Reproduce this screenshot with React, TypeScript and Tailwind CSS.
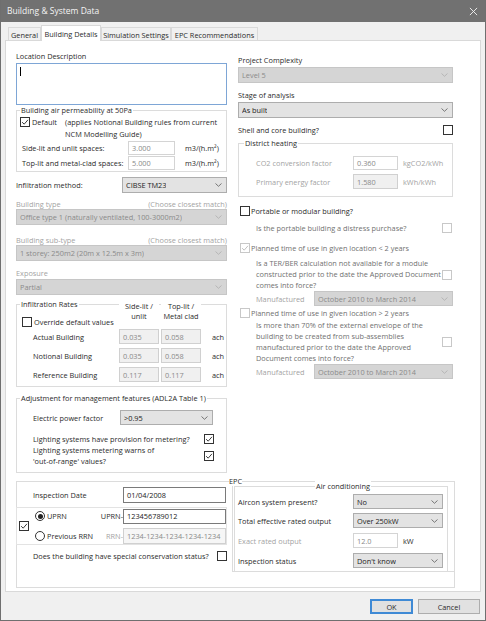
import React from "react";
import clsx from "clsx";

type Tone = "on" | "ro" | "off";

const dim = "text-[#a3a3a3]";
const grey = "text-[#707070]";

function Check({ on = false, faded = false, className = "" }: { on?: boolean; faded?: boolean; className?: string }) {
  return (
    <span
      className={clsx(
        "flex h-[10px] w-[10px] shrink-0 items-center justify-center border bg-white",
        faded ? "border-[#c8c8c8]" : "border-[#333]",
        className
      )}
    >
      {on && (
        <svg viewBox="0 0 10 10" className="h-[8px] w-[8px]">
          <path d="M1.4 5.2 L4 7.7 L8.7 2.3" fill="none" stroke={faded ? "#b8b8b8" : "#222"} strokeWidth="1.1" />
        </svg>
      )}
    </span>
  );
}

function Radio({ on = false }: { on?: boolean }) {
  return (
    <span className="flex h-[10px] w-[10px] shrink-0 items-center justify-center rounded-full border border-[#333] bg-white">
      {on && <span className="h-[5px] w-[5px] rounded-full bg-[#222]" />}
    </span>
  );
}

function Select({ value, off = false, className = "" }: { value: string; off?: boolean; className?: string }) {
  return (
    <div
      className={clsx(
        "flex shrink-0 items-center justify-between border pl-[3px] pr-[4px]",
        off ? "border-[#c6c6c6] bg-[#d5d5d5] text-[#8a8a8a]" : "border-[#adadad] bg-[#e3e3e3] text-[#222]",
        className
      )}
    >
      <span className="truncate whitespace-nowrap">{value}</span>
      <svg viewBox="0 0 7 4" className="h-[4px] w-[7px] shrink-0">
        <path d="M0.5 0.5 L3.5 3.3 L6.5 0.5" fill="none" stroke={off ? "#b2b2b2" : "#6a6a6a"} strokeWidth="0.9" />
      </svg>
    </div>
  );
}

function Field({ value, tone = "on", className = "" }: { value: string; tone?: Tone; className?: string }) {
  return (
    <div
      className={clsx(
        "flex shrink-0 items-center whitespace-nowrap border px-[3px]",
        tone === "on" && "border-[#7a7a7a] bg-white text-[#222]",
        tone === "ro" && "border-[#d4d4d4] bg-white text-[#8a8a8a]",
        tone === "off" && "border-[#d0d0d0] bg-[#f0f0f0] text-[#8a8a8a]",
        className
      )}
    >
      {value}
    </div>
  );
}

function Group({
  label,
  className = "",
  labelClass = "left-[3px]",
  children,
}: {
  label: string;
  className?: string;
  labelClass?: string;
  children?: React.ReactNode;
}) {
  return (
    <div className={clsx("relative shrink-0 border border-[#dcdcdc]", className)}>
      <span className={clsx("absolute -top-[6px] whitespace-nowrap bg-white px-px leading-[10px]", labelClass)}>{label}</span>
      {children}
    </div>
  );
}

function RateRow({ label, a, b, className = "" }: { label: string; a: string; b: string; className?: string }) {
  return (
    <div className={clsx("flex h-[15px] items-center", className)}>
      <span className="w-[102px] pl-[16px]">{label}</span>
      <Field tone="off" value={a} className="h-[15px] w-[40px]" />
      <Field tone="off" value={b} className="ml-[2px] h-[15px] w-[40px]" />
      <span className="ml-[11px]">ach</span>
    </div>
  );
}

function AirRow({ label, children, className = "", muted = false }: { label: string; children: React.ReactNode; className?: string; muted?: boolean }) {
  return (
    <div className={clsx("flex h-[15px] items-center pl-[3px]", className)}>
      <span className={clsx("w-[115px]", muted && dim)}>{label}</span>
      {children}
    </div>
  );
}

const tabs = [
  { name: "General", w: "w-[33px]" },
  { name: "Building Details", w: "w-[60px]", active: true },
  { name: "Simulation Settings", w: "w-[70px]" },
  { name: "EPC Recommendations", w: "w-[87px]" },
];

function LeftColumn() {
  return (
    <div className="flex w-[211px] shrink-0 flex-col">
      <span>Location Description</span>
      <div className="mt-[2px] h-[42px] border border-[#7ea6d6] bg-white pl-[3px] pt-[3px]">
        <span className="block h-[9px] w-px bg-black" />
      </div>

      <Group label="Building air permeability at 50Pa" className="mt-[5px] h-[62px]">
        <div className="flex items-start pl-[3px] pt-[5px] leading-[12px]">
          <Check on className="mt-px" />
          <span className="ml-[2px] w-[33px]">Default</span>
          <span className="whitespace-nowrap">
            (applies Notional Building rules from current
            <br />
            NCM Modelling Guide)
          </span>
        </div>
        <div className="mt-px flex h-[14px] items-center pl-[5px]">
          <span className="w-[106px]">Side-lit and unlit spaces:</span>
          <Field tone="ro" value="3.000" className="h-[14px] w-[47px]" />
          <span className="ml-[10px]">m3/(h.m²)</span>
        </div>
        <div className="mt-px flex h-[14px] items-center pl-[5px]">
          <span className="w-[106px]">Top-lit and metal-clad spaces:</span>
          <Field tone="ro" value="5.000" className="h-[14px] w-[47px]" />
          <span className="ml-[10px]">m3/(h.m²)</span>
        </div>
      </Group>

      <div className="mt-[5px] flex h-[16px] items-center">
        <span className="w-[106px]">Infiltration method:</span>
        <Select value="CIBSE TM23" className="h-[16px] w-[105px]" />
      </div>

      <div className={clsx("mt-[6px] flex justify-between", dim)}>
        <span>Building type</span>
        <span>(Choose closest match)</span>
      </div>
      <Select off value="Office type 1 (naturally ventilated, 100-3000m2)" className="h-[16px]" />

      <div className={clsx("mt-[10px] flex justify-between", dim)}>
        <span>Building sub-type</span>
        <span>(Choose closest match)</span>
      </div>
      <Select off value="1 storey: 250m2 (20m x 12.5m x 3m)" className="h-[16px]" />

      <span className={clsx("mt-[7px]", dim)}>Exposure</span>
      <Select off value="Partial" className="mt-px h-[16px]" />

      <Group label="Infiltration Rates" className="mt-[9px] h-[83px]">
        <div className="flex h-[22px]">
          <div className="flex w-[102px] items-start pl-[5px] pt-[12px]">
            <Check />
            <span className="ml-[2px] whitespace-nowrap">Override default values</span>
          </div>
          <span className="relative -mt-[4px] h-[20px] w-[40px] bg-white text-center">
            Side-lit /
            <br />
            unlit
          </span>
          <span className="relative -mt-[4px] ml-[2px] h-[20px] w-[40px] bg-white text-center whitespace-nowrap">
            Top-lit /
            <br />
            Metal clad
          </span>
        </div>
        <RateRow label="Actual Building" a="0.035" b="0.058" className="mt-[2px]" />
        <RateRow label="Notional Building" a="0.035" b="0.058" className="mt-[4px]" />
        <RateRow label="Reference Building" a="0.117" b="0.117" className="mt-[4px]" />
      </Group>

      <Group label="Adjustment for management features (ADL2A Table 1)" className="mt-[11px] h-[75px]">
        <div className="mt-[11px] flex h-[15px] items-center">
          <span className="w-[103px] pl-[16px]">Electric power factor</span>
          <Select value=">0.95" className="h-[15px] w-[93px]" />
        </div>
        <div className="mt-[8px] flex h-[11px] items-center justify-between pl-[16px] pr-[12px]">
          <span className="whitespace-nowrap">Lighting systems have provision for metering?</span>
          <Check on />
        </div>
        <div className="mt-px flex items-center justify-between pl-[16px] pr-[12px] leading-[11px]">
          <span className="whitespace-nowrap">
            Lighting systems metering warns of
            <br />
            'out-of-range' values?
          </span>
          <Check on />
        </div>
      </Group>
    </div>
  );
}

function RightColumn() {
  return (
    <div className="ml-[11px] flex w-[215px] shrink-0 flex-col pt-[4px]">
      <span>Project Complexity</span>
      <Select off value="Level 5" className="mt-[2px] h-[16px]" />

      <span className="mt-[7px]">Stage of analysis</span>
      <Select value="As built" className="mt-[2px] h-[16px]" />

      <div className="mt-[7px] flex h-[10px] items-center justify-between">
        <span>Shell and core building?</span>
        <Check />
      </div>

      <Group label="District heating" className="mt-[8px] h-[54px]" labelClass="left-[5px]">
        <div className="mt-[12px] flex h-[14px] items-center">
          <span className={clsx("w-[114px] pl-[17px]", dim)}>CO2 conversion factor</span>
          <Field tone="ro" value="0.360" className="h-[14px] w-[45px]" />
          <span className={clsx("ml-[5px]", dim)}>kgCO2/kWh</span>
        </div>
        <div className="mt-[4px] flex h-[15px] items-center">
          <span className={clsx("w-[114px] pl-[17px]", dim)}>Primary energy factor</span>
          <Field tone="off" value="1.580" className="h-[15px] w-[45px]" />
          <span className={clsx("ml-[5px]", dim)}>kWh/kWh</span>
        </div>
      </Group>

      <div className="mt-[9px] flex h-[10px] items-center pl-[2px]">
        <Check />
        <span className="ml-px">Portable or modular building?</span>
      </div>

      <div className="mt-[7px] flex h-[10px] items-center justify-between pl-[18px] pr-px">
        <span className={grey}>Is the portable building a distress purchase?</span>
        <Check faded />
      </div>

      <div className="mt-[10px] flex h-[10px] items-center pl-[2px]">
        <Check on faded />
        <span className={clsx("ml-px", grey)}>Planned time of use in given location &lt; 2 years</span>
      </div>

      <div className="mt-[5px] flex items-center justify-between pl-[18px] pr-px leading-[11px]">
        <span className={clsx("whitespace-nowrap", grey)}>
          Is a TER/BER calculation not available for a module
          <br />
          constructed prior to the date the Approved Document
          <br />
          comes into force?
        </span>
        <Check faded />
      </div>

      <div className="flex h-[15px] items-center">
        <span className={clsx("w-[76px] pl-[18px]", dim)}>Manufactured</span>
        <Select off value="October 2010 to March 2014" className="h-[15px] w-[139px]" />
      </div>

      <div className="mt-[2px] flex h-[10px] items-center pl-[2px]">
        <Check faded />
        <span className={clsx("ml-px", grey)}>Planned time of use in given location &gt; 2 years</span>
      </div>

      <div className="mt-[2px] flex items-center justify-between pl-[18px] pr-px leading-[11px]">
        <span className={clsx("whitespace-nowrap", grey)}>
          Is more than 70% of the external envelope of the
          <br />
          building to be created from sub-assemblies
          <br />
          manufactured prior to the date the Approved
          <br />
          Document comes into force?
        </span>
        <Check faded />
      </div>

      <div className="flex h-[15px] items-center">
        <span className={clsx("w-[76px] pl-[18px]", dim)}>Manufactured</span>
        <Select off value="October 2010 to March 2014" className="h-[15px] w-[139px]" />
      </div>
    </div>
  );
}

function EpcBlock() {
  return (
    <div className="mt-[8px] flex h-[107px] w-[439px] items-start border border-[#dcdcdc]">
      <div className="flex w-[210px] shrink-0 flex-col">
        <div className="mt-[5px] flex h-[16px] items-center">
          <span className="w-[106px] pl-[16px]">Inspection Date</span>
          <Field value="01/04/2008" className="h-[16px] w-[103px]" />
        </div>

        <div className="-ml-px mt-[4px] flex h-[38px] w-[211px] items-center border border-[#e3e3e3]">
          <Check on className="ml-[2px]" />
          <div className="ml-[6px] flex flex-col">
            <div className="flex h-[15px] items-center">
              <span className="flex w-[65px] items-center">
                <Radio on />
                <span className="ml-[2px]">UPRN</span>
              </span>
              <span className="w-[23px] text-right">UPRN-</span>
              <Field value="123456789012" className="h-[15px] w-[103px]" />
            </div>
            <div className="mt-[4px] flex h-[16px] items-center">
              <span className="flex w-[65px] items-center">
                <Radio />
                <span className="ml-[2px] whitespace-nowrap">Previous RRN</span>
              </span>
              <span className={clsx("w-[23px] text-right", dim)}>RRN-</span>
              <Field tone="off" value="1234-1234-1234-1234-1234" className="h-[16px] w-[103px] bg-[#f6f6f6]" />
            </div>
          </div>
        </div>

        <div className="mt-[6px] flex h-[10px] items-center justify-between pl-[16px]">
          <span className="whitespace-nowrap">Does the building have special conservation status?</span>
          <Check />
        </div>
      </div>

      <div className="relative -mr-px -mt-px ml-[5px] h-[91px] w-[223px] shrink-0 border border-[#dcdcdc]">
        <span className="absolute -left-[4px] -top-[6px] bg-white leading-[10px]">EPC</span>
        <Group label="Air conditioning" className="ml-px mt-[4px] h-[86px] w-[214px]" labelClass="left-[80px]">
          <AirRow label="Aircon system present?" className="mt-[7px]">
            <Select value="No" className="h-[15px] w-[90px]" />
          </AirRow>
          <AirRow label="Total effective rated output" className="mt-[4px]">
            <Select value="Over 250kW" className="h-[15px] w-[90px]" />
          </AirRow>
          <AirRow label="Exact rated output" className="mt-[5px]" muted>
            <Field tone="ro" value="12.0" className="h-[15px] w-[45px]" />
            <span className="ml-[5px]">kW</span>
          </AirRow>
          <AirRow label="Inspection status" className="mt-[5px]">
            <Select value="Don't know" className="h-[15px] w-[90px]" />
          </AirRow>
        </Group>
      </div>
    </div>
  );
}

export default function App() {
  return (
    <div className="flex h-[621px] w-[486px] flex-col border-x border-b border-[#6f6f6f] bg-[#f0f0f0] font-['Open_Sans','Noto_Sans',sans-serif] text-[7.35px] leading-[10px] text-[#2b2b2b]">
      {/* title bar */}
      <div className="flex h-[22px] shrink-0 items-center justify-between bg-[#717171] pl-[6px] pr-[7px] text-[8.5px] text-[#f4f4f4]">
        <span>Building &amp; System Data</span>
        <svg viewBox="0 0 10 10" className="h-[9px] w-[9px]">
          <path d="M1 1 L9 9 M9 1 L1 9" stroke="#f4f4f4" strokeWidth="1" />
        </svg>
      </div>

      {/* tab strip */}
      <div className="ml-[4px] flex h-[18px] shrink-0 items-end pl-[3px]">
        {tabs.map((t) =>
          t.active ? (
            <div
              key={t.name}
              className={clsx(
                "relative z-10 -mb-px flex h-[16px] items-center justify-center whitespace-nowrap border border-b-0 border-[#d9d9d9] bg-white",
                t.w
              )}
            >
              {t.name}
            </div>
          ) : (
            <div
              key={t.name}
              className={clsx(
                "flex h-[13px] items-center justify-center whitespace-nowrap border border-b-0 border-[#d9d9d9] bg-[#f0f0f0] pt-px",
                t.w
              )}
            >
              {t.name}
            </div>
          )
        )}
      </div>

      {/* tab page */}
      <div className="ml-[4px] h-[552px] w-[476px] shrink-0 border border-[#d9d9d9] bg-white pl-[10px] pt-[10px]">
        <div className="flex items-start">
          <LeftColumn />
          <RightColumn />
        </div>
        <EpcBlock />
      </div>

      {/* dialog buttons */}
      <div className="mt-[7px] flex justify-end gap-[5px] pr-[5px]">
        <button className="flex h-[15px] w-[43px] items-center justify-center border-2 border-[#3f8ad5] bg-[#e1e1e1]">OK</button>
        <button className="flex h-[15px] w-[62px] items-center justify-center border border-[#adadad] bg-[#e1e1e1]">Cancel</button>
      </div>
    </div>
  );
}
